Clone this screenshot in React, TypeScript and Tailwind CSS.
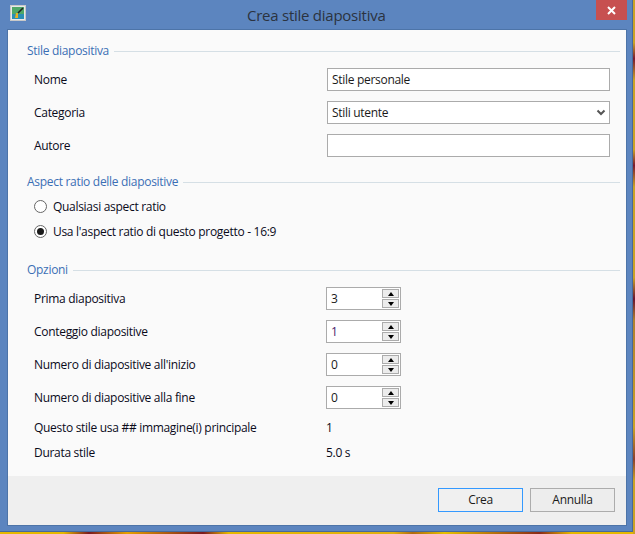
import React from "react";

const font = { fontFamily: '"Open Sans", sans-serif' };

const GroupTitle = ({ title, className = "" }: { title: string; className?: string }) => (
  <div className={`flex items-center gap-[5px] pr-[6px] ${className}`}>
    <span className="text-[12px] leading-[16px] tracking-[-0.3px] text-[#3a6fb5]">{title}</span>
    <div className="h-px flex-1 bg-[#d5dfe5]" />
  </div>
);

const Row = ({ label, children, w = "w-[293px]" }: { label: string; children: React.ReactNode; w?: string }) => (
  <div className="flex h-[33px] items-center pl-[7px]">
    <span className={`${w} text-[12px] tracking-[-0.3px] text-[#0a0a1a]`}>{label}</span>
    {children}
  </div>
);

const Radio = ({ label, checked }: { label: string; checked?: boolean }) => (
  <div className="flex h-[25px] items-center gap-[6px] pl-[7px]">
    <div className="flex size-[13px] items-center justify-center rounded-full border border-[#666] bg-white">
      {checked && <div className="size-[7px] rounded-full bg-[#1a1a1a]" />}
    </div>
    <span className="text-[12px] tracking-[-0.3px] text-[#0a0a1a]">{label}</span>
  </div>
);

const Spin = ({ value, color }: { value: string; color?: string }) => (
  <div className="flex h-[23px] w-[75px] items-center justify-between border border-[#ababab] bg-white pl-[4px] pr-px">
    <span className={`text-[12px] ${color ?? "text-[#1a1a1a]"}`}>{value}</span>
    <div className="flex flex-col gap-px">
      <div className="flex h-[9px] w-[17px] items-center justify-center border border-[#acacac] bg-[#ececec]">
        <div className="size-0 border-x-[3.5px] border-b-[4px] border-x-transparent border-b-black" />
      </div>
      <div className="flex h-[9px] w-[17px] items-center justify-center border border-[#acacac] bg-[#ececec]">
        <div className="size-0 border-x-[3.5px] border-t-[4px] border-x-transparent border-t-black" />
      </div>
    </div>
  </div>
);

export default function App() {
  return (
    <div
      className="flex h-[534px] w-[635px] overflow-hidden bg-[linear-gradient(90deg,#e6b800_10%,#7a1a20_14%,#e6a000_20%,#7a1a20_32%,#e6b800_36%,#e0b010_62%,#b06a10_65%,#e6c000_70%,#8a2a18_85%,#e6b800_90%)]"
      style={font}
    >
      <div className="flex h-[532px] w-[633px] shrink-0 flex-col border-b border-r border-[#47699a] bg-[#5c85bf]">
        {/* title bar */}
        <div className="flex h-[30px] shrink-0">
          <div className="ml-[10px] mt-[5px] flex size-[16px] items-center justify-center border border-[#c8c8c8] bg-[#e8e8e8]">
            <svg width="12" height="12" viewBox="0 0 12 12">
              <rect width="12" height="12" fill="#4fa868" />
              <rect x="0" y="7" width="12" height="5" fill="#2a8fb5" />
              <path d="M3 11 L4 6 L6 6 L6 11 Z" fill="#e8b020" />
              <path d="M6 6 L11 1" stroke="#222" strokeWidth="1.6" />
            </svg>
          </div>
          <div className="flex-1 pl-[221px] pt-[4px] text-[15px] leading-[22px] tracking-[-0.25px] text-[#2b3340]">
            Crea stile diapositiva
          </div>
          <div className="mr-[5px] flex h-[20px] w-[31px] items-center justify-center bg-[#c75050]">
            <svg width="9" height="9" viewBox="0 0 9 9">
              <path d="M1 1 L8 8 M8 1 L1 8" stroke="#fff" strokeWidth="2" />
            </svg>
          </div>
        </div>

        {/* client */}
        <div className="ml-[8px] flex h-[495px] w-[618px] flex-col bg-[#fafafa] shadow-[0_0_0_1px_#4d74a8]">
          <div className="flex-1 pl-[19px] pt-[13px]">
            <GroupTitle title="Stile diapositiva" />
            <div className="mt-[4px]">
              <Row label="Nome">
                <div className="flex h-[23px] w-[283px] items-center border border-[#ababab] bg-white pl-[4px] text-[12px] tracking-[-0.3px] text-[#1a1a1a]">
                  Stile personale
                </div>
              </Row>
              <Row label="Categoria">
                <div className="flex h-[23px] w-[283px] items-center justify-between border border-[#ababab] bg-white pl-[4px] pr-[3px] text-[12px] tracking-[-0.3px] text-[#1a1a1a]">
                  Stili utente
                  <svg width="10" height="8" viewBox="0 0 10 8">
                    <path d="M1.5 1.5 L5 5 L8.5 1.5" fill="none" stroke="#555" strokeWidth="2" />
                  </svg>
                </div>
              </Row>
              <Row label="Autore">
                <div className="h-[23px] w-[283px] border border-[#ababab] bg-white" />
              </Row>
            </div>

            <GroupTitle title="Aspect ratio delle diapositive" className="mt-[12px]" />
            <div className="mt-[4px]">
              <Radio label="Qualsiasi aspect ratio" />
              <Radio label="Usa l'aspect ratio di questo progetto - 16:9" checked />
            </div>

            <GroupTitle title="Opzioni" className="mt-[18px]" />
            <div className="mt-[4px]">
              <Row w="w-[292px]" label="Prima diapositiva"><Spin value="3" /></Row>
              <Row w="w-[292px]" label="Conteggio diapositive"><Spin value="1" color="text-[#4b1a6b]" /></Row>
              <Row w="w-[292px]" label="Numero di diapositive all'inizio"><Spin value="0" /></Row>
              <Row w="w-[292px]" label="Numero di diapositive alla fine"><Spin value="0" /></Row>
            </div>
            <div className="mt-px flex h-[25px] items-center pl-[7px] text-[12px] tracking-[-0.3px] text-[#0a0a1a]">
              <span className="w-[292px]">Questo stile usa ## immagine(i) principale</span>
              <span>1</span>
            </div>
            <div className="flex h-[25px] items-center pl-[7px] text-[12px] tracking-[-0.3px] text-[#0a0a1a]">
              <span className="w-[292px]">Durata stile</span>
              <span>5.0 s</span>
            </div>
          </div>

          {/* footer */}
          <div className="flex h-[49px] shrink-0 justify-end gap-[7px] bg-[#efefef] pr-[11px] pt-[12px]">
            <button className="h-[24px] w-[85px] border border-[#3399ff] bg-[#f0f0f0] text-[12px] tracking-[-0.3px] text-[#1a1a1a]">Crea</button>
            <button className="h-[24px] w-[85px] border border-[#acacac] bg-[#ededed] text-[12px] tracking-[-0.3px] text-[#1a1a1a]">Annulla</button>
          </div>
        </div>
      </div>
      <div className="h-full w-[2px] bg-[linear-gradient(180deg,#c9a227_8%,#7a1a30_11%,#c9a227_15%,#c9a227_28%,#7a1a30_31%,#c9a227_35%,#c9a227_52%,#6a1430_56%,#b08030_60%,#c9a227_80%,#8a4030_86%,#c9a227_90%)]" />
    </div>
  );
}
